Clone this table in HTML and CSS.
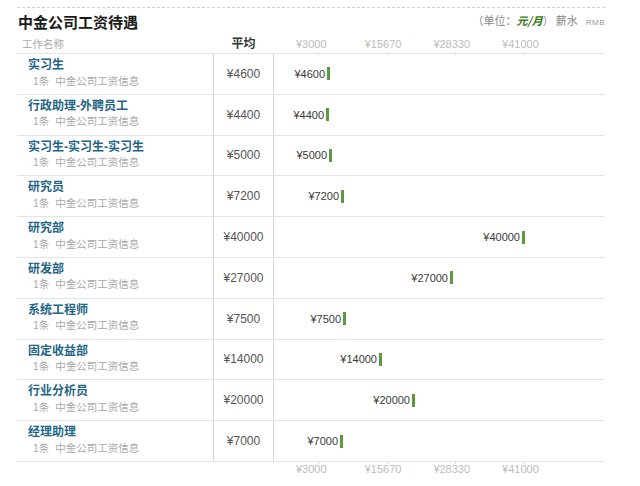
FILE: index.html
```html
<!DOCTYPE html>
<html lang="zh">
<head>
<meta charset="utf-8">
<title>中金公司工资待遇</title>
<link rel="stylesheet" href="styles.css">
</head>
<body>
<div class="page">
  <div class="title-row">
    <h1 class="title">中金公司工资待遇</h1>
    <div class="unit">（单位：<b class="unit-em">元/月</b>）<span class="unit-label">薪水</span><span class="rmb">RMB</span></div>
  </div>
  <div class="head">
    <div class="head-name">工作名称</div>
    <div class="head-avg">平均</div>
    <div class="axis axis-top">
      <span class="tick">¥3000</span><span class="tick">¥15670</span><span class="tick">¥28330</span><span class="tick">¥41000</span>
    </div>
  </div>
  <div class="rows">
    <div class="row">
      <div class="name"><a class="job">实习生</a><div class="sub">1条  中金公司工资信息</div></div>
      <div class="avg">¥4600</div>
      <div class="chart"><div class="bar-wrap" style="width:56px"><span class="val">¥4600</span><i class="bar"></i></div></div>
    </div>
    <div class="row">
      <div class="name"><a class="job">行政助理-外聘员工</a><div class="sub">1条  中金公司工资信息</div></div>
      <div class="avg">¥4400</div>
      <div class="chart"><div class="bar-wrap" style="width:55px"><span class="val">¥4400</span><i class="bar"></i></div></div>
    </div>
    <div class="row">
      <div class="name"><a class="job">实习生-实习生-实习生</a><div class="sub">1条  中金公司工资信息</div></div>
      <div class="avg">¥5000</div>
      <div class="chart"><div class="bar-wrap" style="width:58px"><span class="val">¥5000</span><i class="bar"></i></div></div>
    </div>
    <div class="row">
      <div class="name"><a class="job">研究员</a><div class="sub">1条  中金公司工资信息</div></div>
      <div class="avg">¥7200</div>
      <div class="chart"><div class="bar-wrap" style="width:70px"><span class="val">¥7200</span><i class="bar"></i></div></div>
    </div>
    <div class="row">
      <div class="name"><a class="job">研究部</a><div class="sub">1条  中金公司工资信息</div></div>
      <div class="avg">¥40000</div>
      <div class="chart"><div class="bar-wrap" style="width:251px"><span class="val">¥40000</span><i class="bar"></i></div></div>
    </div>
    <div class="row">
      <div class="name"><a class="job">研发部</a><div class="sub">1条  中金公司工资信息</div></div>
      <div class="avg">¥27000</div>
      <div class="chart"><div class="bar-wrap" style="width:179px"><span class="val">¥27000</span><i class="bar"></i></div></div>
    </div>
    <div class="row">
      <div class="name"><a class="job">系统工程师</a><div class="sub">1条  中金公司工资信息</div></div>
      <div class="avg">¥7500</div>
      <div class="chart"><div class="bar-wrap" style="width:72px"><span class="val">¥7500</span><i class="bar"></i></div></div>
    </div>
    <div class="row">
      <div class="name"><a class="job">固定收益部</a><div class="sub">1条  中金公司工资信息</div></div>
      <div class="avg">¥14000</div>
      <div class="chart"><div class="bar-wrap" style="width:108px"><span class="val">¥14000</span><i class="bar"></i></div></div>
    </div>
    <div class="row">
      <div class="name"><a class="job">行业分析员</a><div class="sub">1条  中金公司工资信息</div></div>
      <div class="avg">¥20000</div>
      <div class="chart"><div class="bar-wrap" style="width:141px"><span class="val">¥20000</span><i class="bar"></i></div></div>
    </div>
    <div class="row">
      <div class="name"><a class="job">经理助理</a><div class="sub">1条  中金公司工资信息</div></div>
      <div class="avg">¥7000</div>
      <div class="chart"><div class="bar-wrap" style="width:69px"><span class="val">¥7000</span><i class="bar"></i></div></div>
    </div>
  </div>
  <div class="foot">
    <div class="axis axis-bottom">
      <span class="tick">¥3000</span><span class="tick">¥15670</span><span class="tick">¥28330</span><span class="tick">¥41000</span>
    </div>
  </div>
</div>
</body>
</html>
```

FILE: styles.css
```css
html, body {
  margin: 0;
  padding: 0;
  background: #fff;
}
body {
  font-family: "Liberation Sans", "Noto Sans CJK SC", sans-serif;
  color: #555;
}
.page {
  width: 588px;
  margin: 7px 0 0 17px;
  border-top: 1px dashed #d2d2d2;
}
.title-row {
  display: flex;
  justify-content: space-between;
  align-items: center;
  height: 28px;
}
.title {
  margin: 0 0 0 1px;
  font-size: 15px;
  font-weight: bold;
  color: #1a1a1a;
  line-height: 28px;
  position: relative;
  top: 1px;
}
.unit {
  font-family: "Noto Sans CJK SC", sans-serif;
  font-size: 11px;
  color: #888;
  display: flex;
  align-items: baseline;
  position: relative;
  top: -2px;
}
.unit-em {
  color: #2f7a14;
  font-style: italic;
  font-weight: bold;
}
.unit-label {
  margin-left: 2px;
}
.rmb {
  font-family: "Liberation Sans", sans-serif;
  font-size: 8px;
  margin-left: 8px;
  letter-spacing: 0.5px;
  color: #999;
}
.head {
  display: grid;
  grid-template-columns: 196px 61px 1fr;
  height: 17px;
  line-height: 17px;
  border-bottom: 1px solid #e3e3e3;
}
.head-name {
  font-size: 10.5px;
  color: #aaa;
  padding-left: 5px;
}
.head-avg {
  font-size: 12px;
  font-weight: bold;
  color: #333;
  text-align: center;
}
.axis {
  display: flex;
  padding-left: 22px;
  font-size: 11px;
  color: #bbb;
}
.tick {
  width: 68.7px;
  flex: none;
  position: relative;
}
.axis-top .tick::after {
  content: "";
  position: absolute;
  left: 22px;
  bottom: -2px;
  width: 1px;
  height: 3px;
  background: #ddd;
}
.axis-bottom .tick::after {
  content: "";
  position: absolute;
  left: 22px;
  top: -1px;
  width: 1px;
  height: 3px;
  background: #ddd;
}
.rows {
  display: flex;
  flex-direction: column;
}
.row {
  display: grid;
  grid-template-columns: 196px 61px 1fr;
  height: 40.8px;
  box-sizing: border-box;
  border-bottom: 1px solid #e3e3e3;
}
.name {
  padding: 4px 0 0 11px;
}
.job {
  display: block;
  font-size: 12px;
  font-weight: bold;
  line-height: 14px;
  color: #1f6585;
}
.sub {
  font-size: 10.5px;
  line-height: 14px;
  margin-top: 1.5px;
  padding-left: 5px;
  color: #a8a8a8;
  white-space: pre;
}
.avg {
  border-left: 1px solid #d6d6d6;
  border-right: 1px solid #d6d6d6;
  display: flex;
  align-items: center;
  justify-content: center;
  font-size: 12px;
  color: #555;
}
.chart {
  display: flex;
  align-items: center;
}
.bar-wrap {
  display: flex;
  justify-content: flex-end;
  align-items: center;
  flex: none;
}
.val {
  font-size: 11px;
  color: #3a3a3a;
  margin-right: 2px;
  white-space: nowrap;
}
.bar {
  display: block;
  width: 3px;
  height: 13px;
  background: #5c9a3e;
}
.foot {
  display: grid;
  grid-template-columns: 257px 1fr;
  height: 14px;
  line-height: 14px;
}
.axis-bottom {
  grid-column: 2;
}
```
